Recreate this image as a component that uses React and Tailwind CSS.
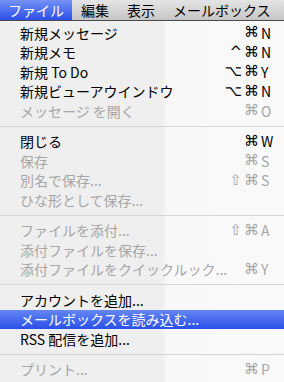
import React from "react";

const JP = { fontFamily: '"Noto Sans CJK JP", "Noto Sans", sans-serif' };

const groups = [
  [
    { label: "新規メッセージ", mod: "⌘", key: "N" },
    { label: "新規メモ", mod: "^⌘", key: "N" },
    { label: "新規 To Do", mod: "⌥⌘", key: "Y" },
    { label: "新規ビューアウインドウ", mod: "⌥⌘", key: "N" },
    { label: "メッセージ を開く", mod: "⌘", key: "O", disabled: true },
  ],
  [
    { label: "閉じる", mod: "⌘", key: "W" },
    { label: "保存", mod: "⌘", key: "S", disabled: true },
    { label: "別名で保存...", mod: "⇧⌘", key: "S", disabled: true },
    { label: "ひな形として保存...", disabled: true },
  ],
  [
    { label: "ファイルを添付...", mod: "⇧⌘", key: "A", disabled: true },
    { label: "添付ファイルを保存...", disabled: true },
    { label: "添付ファイルをクイックルック...", mod: "⌘", key: "Y", disabled: true },
  ],
  [
    { label: "アカウントを追加..." },
    { label: "メールボックスを読み込む...", active: true },
    { label: "RSS 配信を追加..." },
  ],
  [{ label: "プリント...", mod: "⌘", key: "P", disabled: true }],
];

function Row({ item }) {
  const color = item.active
    ? "text-white bg-[linear-gradient(to_bottom,#6486f4,#2a4fe8)]"
    : item.disabled
    ? "text-[#a6a6a6]"
    : "text-black";
  return (
    <div className={`flex items-center h-[19.5px] pl-[20px] pr-[7px] ${color}`}>
      <span className="flex-1 whitespace-nowrap text-[14px] leading-none" style={JP}>
        {item.label}
      </span>
      {item.key && (
        <>
          <span
            className="text-[15px] leading-none text-right whitespace-nowrap tracking-[2px]"
            style={{ fontFamily: '"DejaVu Sans", sans-serif' }}
          >
            {item.mod}
          </span>
          <span className="w-[16px] text-[14px] leading-none" style={JP}>
            {item.key}
          </span>
        </>
      )}
    </div>
  );
}

export default function App() {
  return (
    <div className="w-[284px] h-[382px] overflow-hidden bg-[linear-gradient(to_right,#efefef_0%,#efefef_57%,#f8f8f8_59%,#f9f9f9_100%)]">
      <div className="flex h-[21px] items-stretch border-b border-[#4a4a4a] bg-[linear-gradient(to_bottom,#e4e4e4,#c6c6c6)] text-[14px] leading-none text-black" style={JP}>
        <div className="flex items-center pl-[8px] pr-[8px] text-white bg-[linear-gradient(to_bottom,#7592f6,#2c4fe9)]">
          ファイル
        </div>
        <div className="flex items-center px-[9px]">編集</div>
        <div className="flex items-center px-[9px]">表示</div>
        <div className="flex items-center px-[9px]">メールボックス</div>
      </div>
      <div className="pt-[2px]">
        {groups.map((g, gi) => (
          <div key={gi}>
            {gi > 0 && (
              <div className="h-[11px] flex items-center">
                <div className="h-px w-full bg-[#d6d6d6]" />
              </div>
            )}
            {g.map((item, i) => (
              <Row key={i} item={item} />
            ))}
          </div>
        ))}
      </div>
    </div>
  );
}
